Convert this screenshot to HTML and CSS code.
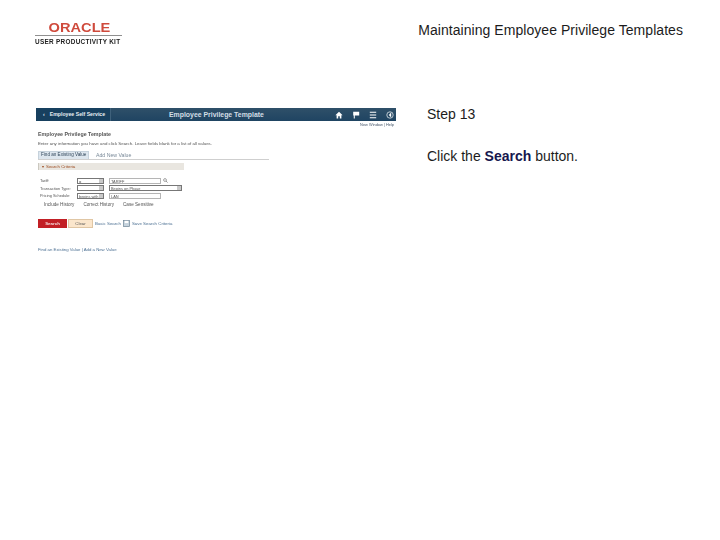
FILE: index.html
```html
<!DOCTYPE html>
<html lang="en">
<head>
<meta charset="utf-8">
<title>Maintaining Employee Privilege Templates</title>
<link rel="stylesheet" href="styles.css">
</head>
<body>
<header class="top">
  <div class="logo">
    <div class="logo-oracle"><span class="logo-word">ORACLE</span></div>
    <div class="logo-kit">USER PRODUCTIVITY KIT</div>
  </div>
  <h1 class="doc-title">Maintaining Employee Privilege Templates</h1>
</header>
<main class="slide">
  <section class="shot">
    <div class="banner">
      <div class="back"><span class="chev">&lsaquo;</span>Employee Self Service</div>
      <div class="banner-title">Employee Privilege Template</div>
      <div class="banner-icons">
        <svg class="ico" viewBox="0 0 10 10"><path d="M5 1 0.5 5.2H2V9.5H4V6.5H6V9.5H8V5.2H9.5Z" fill="#fff"/></svg>
        <svg class="ico" viewBox="0 0 10 10"><path d="M1.5 1H9V5.5H3.5V9.5H2.2V5.5H1.5Z" fill="#fff"/></svg>
        <svg class="ico" viewBox="0 0 10 10"><path d="M1 1.5H9M1 5H9M1 8.5H9" stroke="#fff" stroke-width="1.4"/></svg>
        <svg class="ico" viewBox="0 0 10 10"><circle cx="5" cy="5" r="4" fill="none" stroke="#dfe6ea" stroke-width="1"/><path d="M6.5 2 3.5 5 6.5 8Z" fill="#fff"/></svg>
      </div>
    </div>
    <div class="utility">New Window | Help</div>
    <div class="content">
      <h2 class="page-h">Employee Privilege Template</h2>
      <p class="page-desc">Enter any information you have and click Search. Leave fields blank for a list of all values.</p>
      <div class="tabs">
        <span class="tab tab-active">Find an Existing Value</span>
        <span class="tab">Add New Value</span>
      </div>
      <div class="criteria"><span class="caret">&#9662;</span>Search Criteria</div>
      <div class="form">
        <span class="lbl">Tariff:</span>
        <span class="sel sel-s">=</span>
        <span class="field"><span class="inp inp-w">TARIFF</span><svg class="lookup" viewBox="0 0 6 6"><circle cx="2.4" cy="2.4" r="1.7" fill="none" stroke="#777" stroke-width="0.8"/><path d="M3.6 3.6 5.5 5.5" stroke="#777" stroke-width="0.9"/></svg></span>
        <span class="lbl">Transaction Type:</span>
        <span class="sel sel-s"></span>
        <span class="sel sel-w">Begins on Phase</span>
        <span class="lbl">Pricing Schedule:</span>
        <span class="sel sel-s">begins with</span>
        <span class="field"><span class="inp inp-w">LAN</span></span>
      </div>
      <div class="checks">
        <span>Include History</span>
        <span>Correct History</span>
        <span>Case Sensitive</span>
      </div>
      <div class="actions">
        <span class="btn btn-search">Search</span>
        <span class="btn btn-clear">Clear</span>
        <span class="link">Basic Search</span>
        <svg class="save" viewBox="0 0 8 8"><rect x="0.5" y="0.5" width="7" height="7" fill="#c6d3dd" stroke="#6f8798" stroke-width="0.8"/><rect x="2" y="1" width="4" height="2.5" fill="#fff"/></svg>
        <span class="link">Save Search Criteria</span>
      </div>
      <div class="foot-links">Find an Existing Value | Add a New Value</div>
    </div>
  </section>
  <aside class="step">
    <p class="step-n">Step 13</p>
    <p class="step-t">Click the <strong>Search</strong> button.</p>
  </aside>
</main>
</body>
</html>
```
FILE: styles.css
```css
* { box-sizing: border-box; }
html, body { margin: 0; padding: 0; background: #fff; }
body { width: 720px; height: 540px; overflow: hidden; font-family: "Liberation Sans", Arial, sans-serif; color: #222; }
p, h1, h2 { margin: 0; font-weight: normal; }

.top { display: flex; justify-content: space-between; align-items: flex-start; height: 106px; padding: 22px 37px 0 35px; }
.logo { width: 87px; filter: blur(0.4px); }
.logo-oracle { height: 14px; border-bottom: 1px solid #8f8f8f; text-align: center; font-size: 12.5px; line-height: 13px; font-weight: bold; color: #cf4a3c; white-space: nowrap; }
.logo-word { display: inline-block; transform: scaleX(1.17); padding-left: 1px; }
.logo-kit { margin-top: 2px; font-size: 6.4px; line-height: 7px; font-weight: bold; letter-spacing: 0.3px; color: #222; white-space: nowrap; }
.doc-title { font-size: 14px; line-height: 16px; letter-spacing: 0.05px; color: #1c1c1c; }

.slide { display: flex; padding-left: 36px; }
.shot { width: 360px; height: 150px; margin: 2px 31px 0 0; filter: blur(0.4px); flex: none; }
.banner { display: flex; align-items: center; height: 13px; background: linear-gradient(#2f5069, #1f4462); color: #fff; position: relative; }
.back { width: 75px; height: 13px; background: #17405f; border-right: 1px solid #3f617b; font-size: 5.2px; line-height: 13px; font-weight: bold; padding-left: 7px; white-space: nowrap; color: #e8eef2; }
.chev { margin-right: 5px; }
.banner-title { margin-left: 58px; font-size: 6.9px; font-weight: bold; letter-spacing: 0; color: #d3dee6; white-space: nowrap; }
.banner-icons { margin-left: auto; display: flex; gap: 9px; padding-right: 2px; }
.ico { width: 8px; height: 8px; display: block; }
.utility { height: 8px; padding-top: 1px; padding-right: 2px; text-align: right; font-size: 3.9px; line-height: 6px; color: #45566a; }

.content { padding: 0 0 0 2px; }
.page-h { font-size: 5.3px; line-height: 7px; font-weight: bold; color: #555; margin-top: 2px; }
.page-desc { font-size: 4.4px; line-height: 6px; color: #555; margin-top: 3px; white-space: nowrap; }
.tabs { display: flex; width: 231px; height: 9px; margin-top: 4px; border-bottom: 1px solid #cfcfcf; font-size: 4.6px; line-height: 8px; white-space: nowrap; }
.tab { padding: 0 4px 0 4px; color: #7a8a99; margin-right: 0; font-size: 5.2px; }
.tab-active { background: #dde6ee; border: 1px solid #c6d2dc; border-bottom: 0; line-height: 6px; width: 51px; color: #33485c; padding: 0 2px; margin-right: 3px; font-size: 4.6px; }
.criteria { width: 146px; height: 7px; margin-top: 3px; background: #e9e6e0; border-left: 1px solid #cbc8c0; font-size: 4.4px; line-height: 7px; color: #9c4a1e; padding-left: 3px; white-space: nowrap; }
.caret { margin-right: 2px; }

.form { display: grid; grid-template-columns: 37px 32px 85px; grid-auto-rows: 7.5px; align-items: center; margin-top: 7px; font-size: 3.9px; color: #555; white-space: nowrap; margin-left: 2px; }
.lbl { color: #555; }
.sel, .inp { height: 6px; line-height: 5px; border: 1px solid #777; background: #fff; overflow: hidden; padding-left: 1px; }
.sel-s { width: 27px; background: linear-gradient(to right, #fff 21px, #c9c9c9 21px); }
.sel-w { width: 73px; background: linear-gradient(to right, #fff 67px, #c9c9c9 67px); }
.field { display: flex; align-items: center; gap: 2px; }
.inp { display: block; border-color: #b5b5b5; width: 52px; }
.lookup { width: 5px; height: 5px; }

.checks { display: flex; gap: 9px; margin: 2px 0 0 6px; font-size: 4.6px; line-height: 6px; color: #555; white-space: nowrap; }
.actions { display: flex; align-items: center; margin-top: 11px; white-space: nowrap; font-size: 4.4px; color: #4b6f92; }
.btn { height: 9px; font-size: 4.4px; line-height: 9px; text-align: center; }
.btn-search { width: 29px; margin-right: 1px; background: #c21f25; color: #f6dcdc; font-weight: bold; }
.btn-clear { width: 25px; margin-right: 2px; background: #fbe6cc; border: 1px solid #e0c6a4; line-height: 7px; color: #5a5a5a; }
.save { width: 7px; height: 7px; margin: 0 2px; }
.foot-links { margin-top: 18px; font-size: 4.3px; line-height: 7px; color: #4b6f92; white-space: nowrap; }

.step { font-size: 14px; line-height: 16px; color: #1c1c1c; }
.step-t { margin-top: 26px; }
.step-t strong { color: #16174e; font-weight: bold; }
```
